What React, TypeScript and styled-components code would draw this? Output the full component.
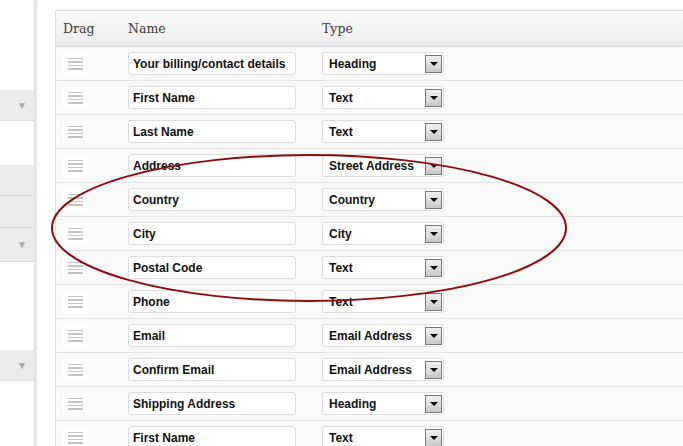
import React from 'react';
import styled, { createGlobalStyle } from 'styled-components';

const GlobalStyle = createGlobalStyle`
  html, body {
    margin: 0;
    padding: 0;
    background: #ffffff;
    overflow: hidden;
  }
  body {
    font-family: "Liberation Sans", Arial, sans-serif;
  }
`;

type Field = { name: string; type: string };

const fields: Field[] = [
  { name: 'Your billing/contact details', type: 'Heading' },
  { name: 'First Name', type: 'Text' },
  { name: 'Last Name', type: 'Text' },
  { name: 'Address', type: 'Street Address' },
  { name: 'Country', type: 'Country' },
  { name: 'City', type: 'City' },
  { name: 'Postal Code', type: 'Text' },
  { name: 'Phone', type: 'Text' },
  { name: 'Email', type: 'Email Address' },
  { name: 'Confirm Email', type: 'Email Address' },
  { name: 'Shipping Address', type: 'Heading' },
  { name: 'First Name', type: 'Text' },
];

const Page = styled.div`
  position: relative;
  display: flex;
  width: 683px;
  height: 446px;
  overflow: hidden;
`;

const Sidebar = styled.div`
  width: 35px;
  box-sizing: border-box;
  flex-shrink: 0;
  display: flex;
  flex-direction: column;
  background: #fff;
  box-shadow: 1px 0 3px rgba(0, 0, 0, 0.18);
  border-right: 1px solid #e2e2e2;
  z-index: 1;
`;

const SideGap = styled.div<{ $h: number }>`
  height: ${(p) => p.$h}px;
  flex-shrink: 0;
`;

const SideBar = styled.div<{ $h: number }>`
  height: ${(p) => p.$h}px;
  flex-shrink: 0;
  background: #ececec;
  border-bottom: 1px solid #dedede;
  display: flex;
  align-items: center;
  justify-content: flex-end;
  padding-right: 7px;
  color: #a8a8a8;
  font-size: 10px;
  box-sizing: border-box;
`;

const Main = styled.div`
  flex: 1;
  padding: 10px 0 0 20px;
`;

const Table = styled.div`
  width: 700px;
  border-left: 1px solid #dddddd;
  border-top: 1px solid #dddddd;
`;

const Header = styled.div`
  display: flex;
  align-items: center;
  height: 35px;
  background: linear-gradient(#fafafa, #ececec);
  border-bottom: 1px solid #dcdcdc;
  font-family: "DejaVu Serif", Georgia, serif;
  font-size: 12.5px;
  color: #3a3a3a;
`;

const HeadCell = styled.div<{ $w: number; $pl: number }>`
  width: ${(p) => p.$w}px;
  padding-left: ${(p) => p.$pl}px;
  box-sizing: border-box;
  flex-shrink: 0;
`;

const Row = styled.div`
  display: flex;
  align-items: center;
  height: 33px;
  background: #f9f9f9;
  border-bottom: 1px solid #e4e4e4;
`;

const Cell = styled.div<{ $w: number; $pl: number }>`
  width: ${(p) => p.$w}px;
  padding-left: ${(p) => p.$pl}px;
  box-sizing: border-box;
  flex-shrink: 0;
  display: flex;
  align-items: center;
`;

const Handle = styled.div`
  width: 25px;
  height: 22px;
  background: #ffffff;
  display: flex;
  flex-direction: column;
  align-items: center;
  justify-content: center;
  gap: 2px;
`;

const HandleLine = styled.span`
  display: block;
  width: 15px;
  height: 1.5px;
  background: #c4c4c4;
`;

const TextInput = styled.div`
  width: 168px;
  height: 23px;
  box-sizing: border-box;
  background: #fff;
  border: 1px solid #dedede;
  border-radius: 3px;
  padding-left: 4px;
  display: flex;
  align-items: center;
  font-weight: bold;
  font-size: 12px;
  color: #111;
  white-space: nowrap;
  overflow: hidden;
`;

const Select = styled.div`
  width: 122px;
  height: 23px;
  box-sizing: border-box;
  background: #fff;
  border: 1px solid #dedede;
  border-radius: 3px;
  padding: 0 1px 0 6px;
  display: flex;
  align-items: center;
  justify-content: space-between;
  font-weight: bold;
  font-size: 12px;
  color: #111;
  white-space: nowrap;
`;

const ArrowButton = styled.span`
  width: 17px;
  height: 18px;
  box-sizing: border-box;
  border: 1px solid #777;
  background: linear-gradient(#f2f2f2, #c9c9c9);
  display: flex;
  align-items: center;
  justify-content: center;
  flex-shrink: 0;
  &::after {
    content: '';
    width: 0;
    height: 0;
    border-left: 4px solid transparent;
    border-right: 4px solid transparent;
    border-top: 4px solid #000;
  }
`;

const Overlay = styled.svg`
  position: absolute;
  left: 0;
  top: 0;
  pointer-events: none;
  z-index: 2;
`;

const DragHandle = () => (
  <Handle>
    <HandleLine />
    <HandleLine />
    <HandleLine />
    <HandleLine />
  </Handle>
);

const App = () => (
  <>
    <GlobalStyle />
    <Page>
      <Sidebar>
        <SideGap $h={90} />
        <SideBar $h={31}>▼</SideBar>
        <SideGap $h={44} />
        <SideBar $h={31} />
        <SideBar $h={32} />
        <SideBar $h={34}>▼</SideBar>
        <SideGap $h={88} />
        <SideBar $h={31}>▼</SideBar>
      </Sidebar>
      <Main>
        <Table>
          <Header>
            <HeadCell $w={72} $pl={7}>Drag</HeadCell>
            <HeadCell $w={194} $pl={0}>Name</HeadCell>
            <HeadCell $w={200} $pl={0}>Type</HeadCell>
          </Header>
          {fields.map((f, i) => (
            <Row key={i}>
              <Cell $w={72} $pl={7}>
                <DragHandle />
              </Cell>
              <Cell $w={194} $pl={0}>
                <TextInput>{f.name}</TextInput>
              </Cell>
              <Cell $w={200} $pl={0}>
                <Select>
                  {f.type}
                  <ArrowButton />
                </Select>
              </Cell>
            </Row>
          ))}
        </Table>
      </Main>
      <Overlay width="683" height="446" viewBox="0 0 683 446">
        <ellipse cx="309" cy="228" rx="257" ry="73" fill="none" stroke="#8e0b0b" strokeWidth="2" />
      </Overlay>
    </Page>
  </>
);

export default App;
